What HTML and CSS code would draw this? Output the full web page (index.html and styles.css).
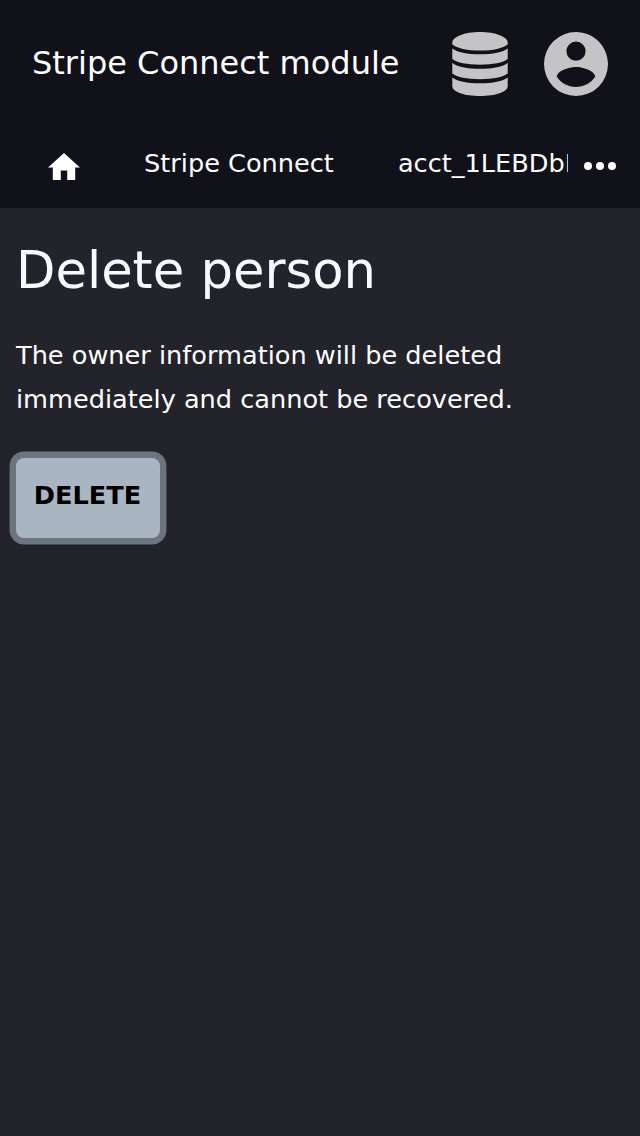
FILE: index.html
```html
<!DOCTYPE html>
<html lang="en">
<head>
<meta charset="utf-8">
<title>Delete person</title>
<link rel="stylesheet" href="styles.css">
</head>
<body>
<header class="header">
  <div class="topbar">
    <div class="title">Stripe Connect module</div>
    <svg class="icon" viewBox="0 0 64 64"><path d="M32 0C16.500 0 4.300 5 4.300 10.500v2C9 16.300 19 18.600 32 18.600s23-2.300 27.700-6.100v-2C59.700 5 47.500 0 32 0z"/><path d="M4.300 16.400C9 20 19 22.200 32 22.200s23-2.200 27.700-5.800v10.700C55 30.700 45 32.800 32 32.800S9 30.700 4.300 27.100z"/><path d="M4.300 30.900C9 34.500 19 36.700 32 36.700s23-2.200 27.700-5.800v10.700C55 45.200 45 47.300 32 47.300S9 45.200 4.300 41.600z"/><path d="M4.300 45.400C9 49 19 51.200 32 51.200s23-2.200 27.700-5.800v8.600C59.700 60 47.500 64 32 64S4.300 60 4.300 54z"/></svg>
    <svg class="icon" viewBox="2 2 20 20"><path d="M12 19.200c-2.500 0-4.710-1.280-6-3.200.03-2 4-3.100 6-3.100s5.970 1.100 6 3.100a7.230 7.230 0 0 1-6 3.200M12 5a3 3 0 0 1 3 3 3 3 0 0 1-3 3 3 3 0 0 1-3-3 3 3 0 0 1 3-3m0-3A10 10 0 0 0 2 12a10 10 0 0 0 10 10 10 10 0 0 0 10-10c0-5.530-4.500-10-10-10z"/></svg>
  </div>
  <nav class="nav">
    <a class="home"><svg viewBox="2 3 20 17"><path d="M10 20v-6h4v6h5v-8h3L12 3 2 12h3v8z"/></svg></a>
    <a class="crumb">Stripe Connect</a>
    <a class="crumb last">acct_1LEBDbHijk</a>
    <svg class="more" viewBox="0 0 32 8"><circle cx="4" cy="4" r="4"/><circle cx="16" cy="4" r="4"/><circle cx="28" cy="4" r="4"/></svg>
  </nav>
</header>
<main class="main">
  <h1 class="heading">Delete person</h1>
  <p class="text">The owner information will be deleted immediately and cannot be recovered.</p>
  <button class="button">DELETE</button>
</main>
</body>
</html>
```
FILE: styles.css
```css
* { box-sizing: border-box; }
body { margin: 0; min-height: 1136px; background: #23232b; color: #fff; font: 26px/44px "DejaVu Sans", sans-serif; }
.header { height: 208px; background: #11111a; }
.topbar { display: flex; align-items: center; height: 128px; padding: 0 32px; }
.title { flex: 1; padding-bottom: 2px; font-size: 32px; white-space: nowrap; }
.icon { width: 64px; height: 64px; margin-left: 32px; fill: #c4c4c6; }
.nav { display: flex; height: 80px; align-items: center; padding: 0 24px 4px 48px; font-size: 25.6px; }
.home { width: 32px; margin-right: 64px; padding-top: 1px; }
.home svg { display: block; width: 32px; height: 27.2px; fill: #fff; }
.crumb { padding-bottom: 6px; white-space: nowrap; }
.last { width: 170px; margin-left: 64px; overflow: hidden; }
.more { width: 32px; height: 8px; margin-left: auto; fill: #fff; }
.main { padding: 32px 16px; }
.heading { margin: 0; color: #f9fafc; font-size: 51.2px; line-height: 60px; font-weight: 400; }
.text { margin: 33px 0 37px; font-size: 25.6px; }
.button { display: block; width: 144px; height: 80px; padding: 0 1px 6px 0; border: 0; border-radius: 8px; background: #a9b5c1; color: #000; font: bold 25.6px "DejaVu Sans", sans-serif; box-shadow: 0 0 0 6.4px #6c757e; }
```
